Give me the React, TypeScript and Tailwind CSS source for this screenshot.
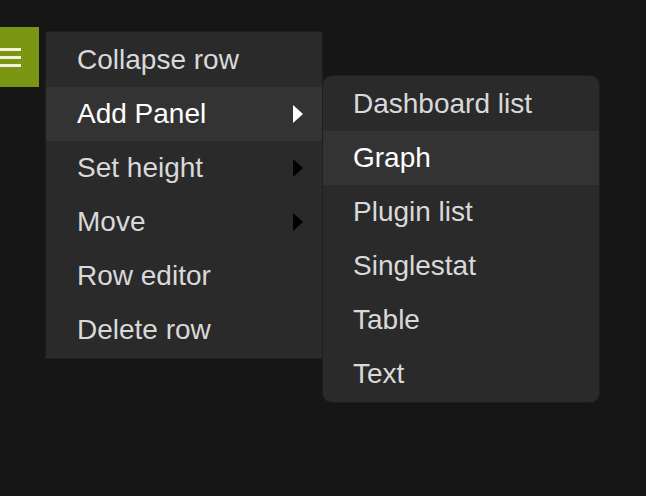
import React from "react";

const mainItems = [
  { label: "Collapse row" },
  { label: "Add Panel", sub: true, active: true },
  { label: "Set height", sub: true },
  { label: "Move", sub: true },
  { label: "Row editor" },
  { label: "Delete row" },
];

const panelItems = ["Dashboard list", "Graph", "Plugin list", "Singlestat", "Table", "Text"];

export default function App() {
  return (
    <div
      className="relative w-[646px] h-[496px] bg-[#161616] overflow-hidden"
      style={{ fontFamily: '"Liberation Sans", Arial, sans-serif' }}
    >
      <div className="pt-[27px]">
        <div className="w-[39px] h-[60px] bg-[#7b9612] flex flex-col justify-center gap-[5px]">
          <div className="w-[21px] h-[3px] bg-[#f3f1dc]" />
          <div className="w-[21px] h-[3px] bg-[#f3f1dc]" />
          <div className="w-[21px] h-[3px] bg-[#f3f1dc]" />
        </div>
      </div>

      {/* row menu */}
      <div className="absolute left-[45px] top-[31px] w-[278px] border border-[#1e1e1e] bg-[#2a2a2a] py-[1px]">
        {mainItems.map((item) => (
          <div
            key={item.label}
            className={`relative h-[54px] flex items-center pl-[31px] text-[28px] ${
              item.active ? "bg-[#333333] text-white" : "text-[#d8d9da]"
            }`}
          >
            {item.label}
            {item.sub && (
              <span
                className={`absolute right-[19px] top-1/2 -translate-y-1/2 w-0 h-0 border-y-[9px] border-y-transparent border-l-[10px] ${
                  item.active ? "border-l-white" : "border-l-black"
                }`}
              />
            )}
          </div>
        ))}
      </div>

      {/* Add Panel submenu */}
      <div className="absolute left-[322px] top-[75px] w-[278px] rounded-[10px] border border-[#1e1e1e] bg-[#2a2a2a] py-[1px] overflow-hidden">
        {panelItems.map((label) => (
          <div
            key={label}
            className={`h-[54px] flex items-center pl-[30px] text-[28px] ${
              label === "Graph" ? "bg-[#333333] text-white" : "text-[#d8d9da]"
            }`}
          >
            {label}
          </div>
        ))}
      </div>
    </div>
  );
}
